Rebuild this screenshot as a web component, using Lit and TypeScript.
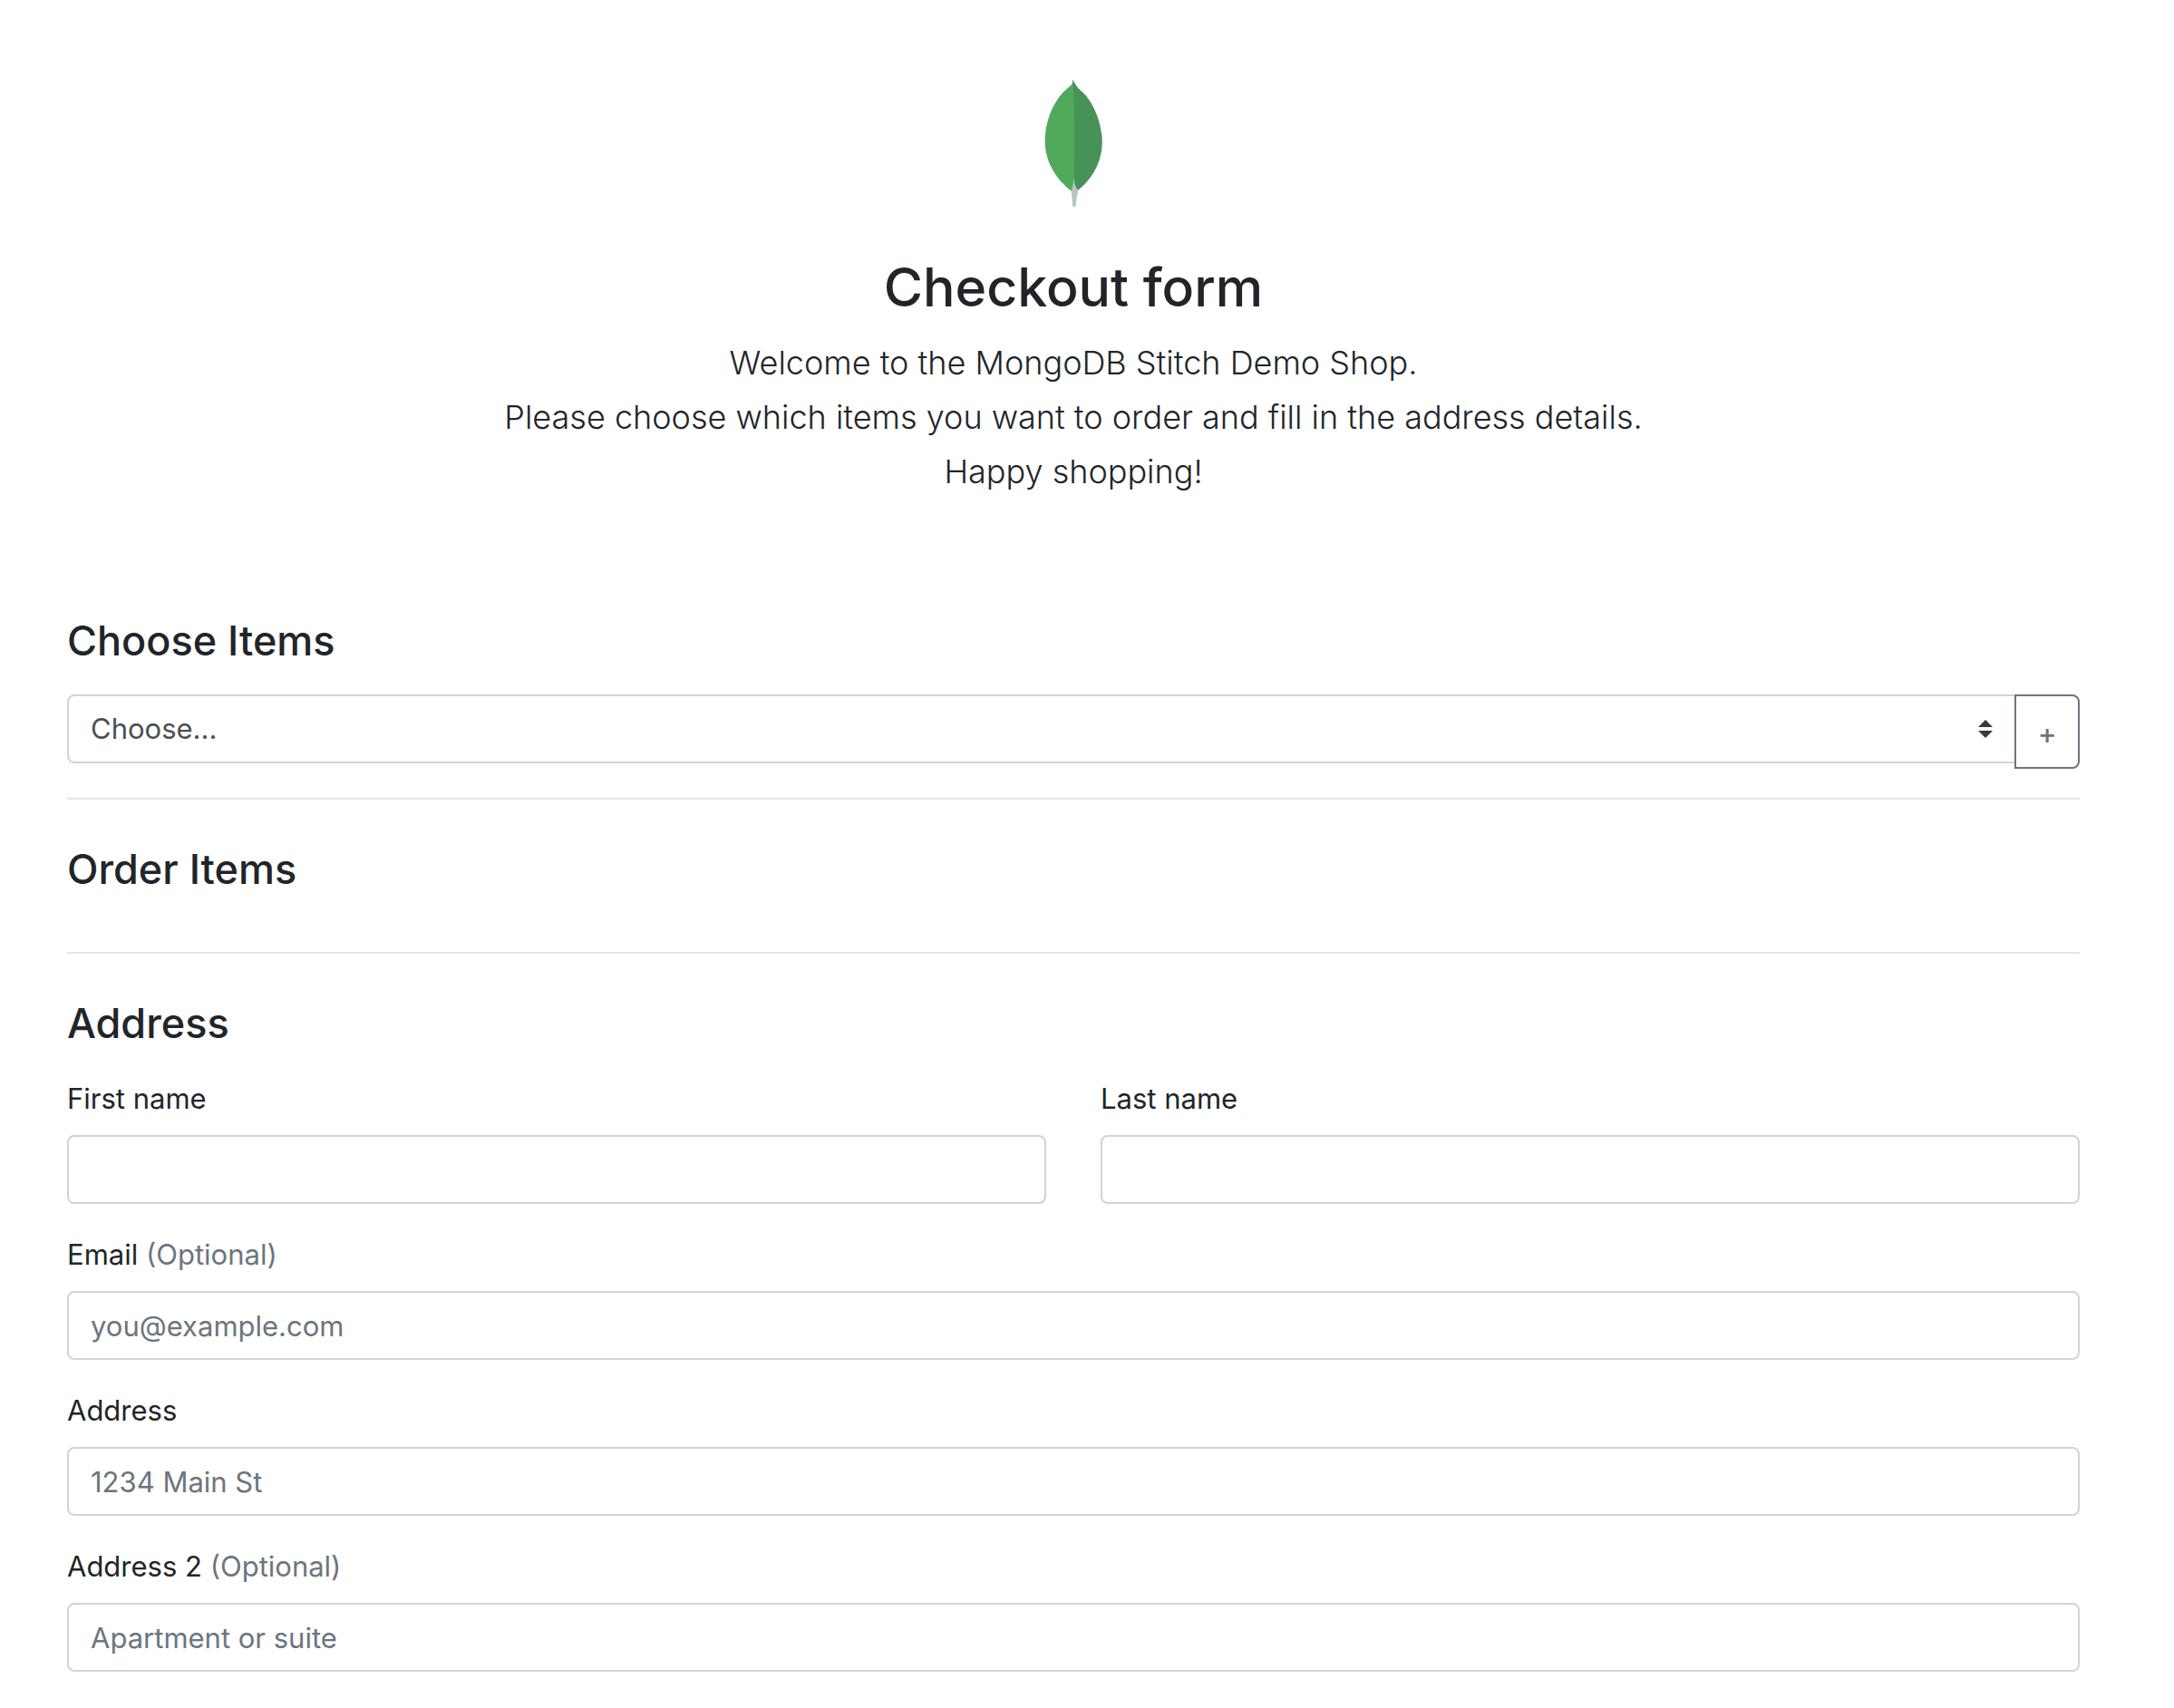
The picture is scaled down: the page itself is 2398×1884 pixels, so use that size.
import { LitElement, html, css, nothing } from "lit";
import { customElement, property } from "lit/decorators.js";

@customElement("leaf-logo")
export class LeafLogo extends LitElement {
  static styles = css`
    :host {
      display: block;
      line-height: 0;
    }
    .leaf {
      width: 64px;
      height: 142px;
    }
  `;

  render() {
    return html`
      <svg class="leaf" viewBox="156 51 192 426" role="img" aria-label="MongoDB">
        <path
          fill="#4faa5c"
          d="M250 53 C250 63 248 68 243 73 C233 82 224 90 215 99 C182 136 162 188 158 245 C155 318 188 376 246 423 L262 395 L262 80Z"
        />
        <path
          fill="#479257"
          d="M250 53 C255 63 260 71 267 80 C275 89 284 96 293 106 C324 143 343 199 347 247 C350 321 319 378 267 420 L253 400 C253 385 254 372 255 320 C256 230 255 130 250 53Z"
        />
        <path
          fill="#b9c5c2"
          d="M253 370 C254 394 257 411 268 419 C264 437 261 455 260 473 L249 473 C249 455 247 440 245 422 C251 404 253 388 253 370Z"
        />
      </svg>
    `;
  }
}

@customElement("text-field")
export class TextField extends LitElement {
  @property() label = "";
  @property() type = "text";
  @property() placeholder = "";
  @property({ type: Boolean }) optional = false;

  static styles = css`
    :host {
      display: block;
    }
    .field {
      display: flex;
      flex-direction: column;
      gap: 16px;
    }
    .label {
      line-height: 48px;
    }
    .muted {
      color: #6c757d;
    }
    .input {
      box-sizing: border-box;
      width: 100%;
      height: 76px;
      margin: 0;
      padding: 12px 24px;
      border: 2px solid #ced4da;
      border-radius: 8px;
      background: #fff;
      color: #495057;
      font: inherit;
    }
    .input::placeholder {
      color: #6c757d;
      opacity: 1;
    }
    .input:focus {
      outline: 6px solid #bfdeff;
      border-color: #80bdff;
    }
  `;

  render() {
    return html`
      <div class="field">
        <label class="label" for="control"
          >${this.label}${this.optional
            ? html` <span class="muted">(Optional)</span>`
            : nothing}</label
        >
        <input
          class="input"
          id="control"
          type=${this.type}
          placeholder=${this.placeholder}
        />
      </div>
    `;
  }
}

@customElement("app-root")
export class AppRoot extends LitElement {
  static styles = css`
    :host {
      display: block;
      background: #fff;
      color: #212529;
      font-family: Inter, "Liberation Sans", sans-serif;
      font-size: 31px;
      line-height: 48px;
    }
    .page {
      padding: 0 104px 32px 74px;
    }
    .intro {
      display: flex;
      flex-direction: column;
      align-items: center;
      padding: 87px 0 128px;
      text-align: center;
    }
    .title {
      margin: 50px 0 15px;
      font-size: 59px;
      font-weight: 500;
      line-height: 76px;
    }
    .lead {
      margin: 0;
      font-size: 36px;
      font-weight: 300;
      line-height: 60px;
    }
    .section {
      display: flow-root;
    }
    .heading {
      margin: 0 0 31px;
      font-size: 45px;
      font-weight: 500;
      line-height: 57px;
    }
    .picker {
      display: flex;
      align-items: flex-start;
    }
    .choice {
      display: grid;
      flex: 1;
      align-items: center;
    }
    .select {
      grid-area: 1 / 1;
      box-sizing: border-box;
      width: 100%;
      height: 76px;
      margin: 0;
      padding: 12px 56px 12px 24px;
      border: 2px solid #ced4da;
      border-right: 0;
      border-radius: 8px 0 0 8px;
      background: #fff;
      color: #495057;
      font: inherit;
      appearance: none;
    }
    .arrows {
      grid-area: 1 / 1;
      justify-self: end;
      width: 16px;
      height: 20px;
      margin-right: 24px;
      pointer-events: none;
    }
    .add {
      box-sizing: border-box;
      width: 72px;
      height: 82px;
      margin: 0;
      padding: 4px 0 0;
      border: 2px solid #6c757d;
      border-radius: 0 8px 8px 0;
      background: transparent;
      color: #6c757d;
      font: inherit;
      font-weight: 500;
      cursor: pointer;
    }
    .rule {
      height: 2px;
      margin: 32px 0 48px;
      border: 0;
      background: #e5e5e5;
    }
    .fields {
      display: grid;
      grid-template-columns: 1fr 1fr;
      gap: 32px 60px;
    }
    .wide {
      grid-column: 1 / -1;
    }
  `;

  render() {
    return html`
      <main class="page">
        <header class="intro">
          <leaf-logo></leaf-logo>
          <h2 class="title">Checkout form</h2>
          <p class="lead">
            Welcome to the MongoDB Stitch Demo Shop.<br />
            Please choose which items you want to order and fill in the address
            details.<br />
            Happy shopping!
          </p>
        </header>

        <section class="section">
          <h4 class="heading" id="choose">Choose Items</h4>
          <div class="picker">
            <div class="choice">
              <select class="select" aria-labelledby="choose">
                <option>Choose...</option>
              </select>
              <svg class="arrows" viewBox="0 0 4 5" aria-hidden="true">
                <path fill="#343a40" d="M2 0L0 2h4zm0 5L0 3h4z" />
              </svg>
            </div>
            <button class="add" type="button">+</button>
          </div>
        </section>
        <hr class="rule" />
        <section class="section">
          <h4 class="heading">Order Items</h4>
        </section>
        <hr class="rule" />
        <section class="section">
          <h4 class="heading">Address</h4>
          <form class="fields">
            <text-field label="First name"></text-field>
            <text-field label="Last name"></text-field>
            <text-field
              class="wide"
              label="Email"
              type="email"
              placeholder="you@example.com"
              optional
            ></text-field>
            <text-field
              class="wide"
              label="Address"
              placeholder="1234 Main St"
            ></text-field>
            <text-field
              class="wide"
              label="Address 2"
              placeholder="Apartment or suite"
              optional
            ></text-field>
          </form>
        </section>
      </main>
    `;
  }
}
